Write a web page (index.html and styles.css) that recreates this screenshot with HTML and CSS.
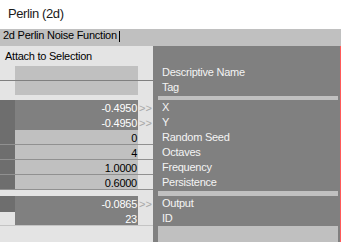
FILE: index.html
```html
<!doctype html>
<html>
  <head>
    <meta charset="UTF-8">
    <title>Perlin (2d)</title>
    <link rel="stylesheet" href="styles.css">
  </head>
  <body>
    <div class="title">Perlin (2d)</div>
    <div class="namebar"><span>2d Perlin Noise Function</span><span class="caret"></span></div>

    <div class="panels">
      <div class="left">
        <div class="attach">Attach to Selection</div>

        <div class="row meta sep"><i></i><span class="val"></span><i></i></div>
        <div class="row meta"><i></i><span class="val"></span><i></i></div>

        <div class="group">
          <div class="row out light"><i class="pin"></i><span class="val">-0.4950</span><i class="go">&gt;&gt;</i></div>
          <div class="row out"><i class="pin"></i><span class="val">-0.4950</span><i class="go">&gt;&gt;</i></div>
          <div class="row in"><i class="pin"></i><span class="val">0</span><i></i></div>
          <div class="row in"><i class="pin"></i><span class="val">4</span><i></i></div>
          <div class="row in"><i class="pin"></i><span class="val">1.0000</span><i></i></div>
          <div class="row in"><i class="pin"></i><span class="val">0.6000</span><i></i></div>
        </div>

        <div class="group">
          <div class="row out light"><i class="pin"></i><span class="val">-0.0865</span><i class="go">&gt;&gt;</i></div>
          <div class="row out light"><i></i><span class="val">23</span><i></i></div>
        </div>
      </div>

      <div class="right">
        <ul class="labels top">
          <li>Descriptive Name</li>
          <li>Tag</li>
        </ul>
        <div class="band"></div>
        <ul class="labels">
          <li>X</li>
          <li>Y</li>
          <li>Random Seed</li>
          <li>Octaves</li>
          <li>Frequency</li>
          <li>Persistence</li>
        </ul>
        <div class="band wide"></div>
        <ul class="labels">
          <li>Output</li>
          <li>ID</li>
        </ul>
        <div class="empty"></div>
      </div>
    </div>
  </body>
</html>
```

FILE: styles.css
```css
html, body {
  height: 100%;
}

body {
  margin: 0;
  display: flex;
  flex-direction: column;
  overflow: hidden;
  background: white;
  font-family: "Liberation Sans", Arial, sans-serif;
  font-size: 11px;
  letter-spacing: -0.25px;
}

ul {
  list-style-type: none;
  padding: 0;
  margin: 0;
}

i {
  font-style: normal;
}

.title {
  height: 29px;
  line-height: 28px;
  padding-left: 8px;
  font-size: 13px;
  letter-spacing: -0.4px;
  color: #1a1a1a;
}

.namebar {
  height: 17px;
  line-height: 13px;
  padding-left: 3px;
  background: #c0c0c0;
  color: black;
  display: flex;
}

.caret {
  width: 1px;
  height: 11px;
  margin: 2px 0 0 2px;
  background: black;
}

.panels {
  flex: 1;
  display: flex;
  min-height: 0;
}

/* left: value column */

.left {
  width: 153px;
  background: #e4e4e4;
}

.attach {
  height: 20px;
  line-height: 20px;
  padding-left: 5px;
  color: black;
}

.row {
  display: grid;
  grid-template-columns: 15px 123px 15px;
  height: 14px;
  line-height: 16px;
}

.row.sep {
  border-bottom: 1px solid #808080;
}

.row.meta .val {
  background: #c0c0c0;
}

.group {
  margin-top: 5px;
}

.group + .group {
  margin-top: 6px;
}

.row.out, .row.in {
  border-bottom: 1px solid #909090;
}

.row.light {
  border-bottom-color: #c4c4c4;
}

.row .val {
  text-align: right;
  padding-right: 1px;
  overflow: hidden;
}

.row.out .val {
  background: #808080;
  color: white;
}

.row.in .val {
  background: #c0c0c0;
  color: black;
}

.pin {
  background: #6e6e6e;
}

.go {
  color: #a8a8a8;
  text-align: center;
  letter-spacing: 0;
  background: #e4e4e4;
}

/* right: labels */

.right {
  flex: 1;
  display: flex;
  flex-direction: column;
  padding: 19px 2px 0 5px;
  background: #808080;
  border-right: 1px solid #ff5a5a;
}

.labels > li {
  height: 15px;
  line-height: 15px;
  padding-left: 4px;
  color: #f4f4f4;
}

.band {
  height: 4px;
  margin-top: 1px;
  background: #c0c0c0;
}

.band.wide {
  height: 5px;
}

.empty {
  flex: 1;
  background: #c0c0c0;
}
```
